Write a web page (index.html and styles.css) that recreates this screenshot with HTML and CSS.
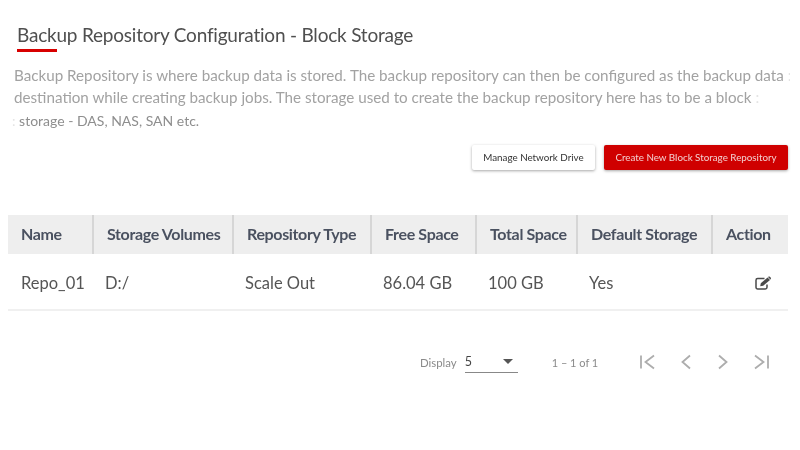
FILE: index.html
```html
<!DOCTYPE html>
<html lang="en">
<head>
    <meta charset="UTF-8">
    <meta name="viewport" content="width=device-width, initial-scale=1.0">
    <title>Backup Repository Configuration</title>
    <link rel="stylesheet" href="styles.css">
</head>
<body>
    <div class="page-head">
        <h1 class="page-title">Backup Repository Configuration - Block Storage</h1>
        <div class="title-rule"></div>
    </div>

    <div class="page-desc">
        <p>Backup Repository is where backup data is stored. The backup repository can then be configured as the backup data <span class="desc-cut">:</span></p>
        <p>destination while creating backup jobs. The storage used to create the backup repository here has to be a block <span class="desc-cut">:</span></p>
        <p class="desc-last"><span class="desc-cut">:</span> storage - DAS, NAS, SAN etc.</p>
    </div>

    <div class="button-row">
        <button class="btn btn-white">Manage Network Drive</button>
        <button class="btn btn-red">Create New Block Storage Repository</button>
    </div>

    <table class="repo-table">
        <colgroup>
            <col class="col-name">
            <col class="col-volumes">
            <col class="col-type">
            <col class="col-free">
            <col class="col-total">
            <col class="col-default">
            <col class="col-action">
        </colgroup>
        <thead>
            <tr>
                <th>Name</th>
                <th>Storage Volumes</th>
                <th>Repository Type</th>
                <th>Free Space</th>
                <th>Total Space</th>
                <th>Default Storage</th>
                <th>Action</th>
            </tr>
        </thead>
        <tbody>
            <tr>
                <td>Repo_01</td>
                <td>D:/</td>
                <td>Scale Out</td>
                <td>86.04 GB</td>
                <td>100 GB</td>
                <td>Yes</td>
                <td class="action-cell">
                    <svg class="edit-icon" width="17" height="14" viewBox="0 0 17 14">
                        <path d="M12 8.5V11.2C12 12.2 11.3 12.9 10.3 12.9H2.7C1.7 12.9 1 12.2 1 11.2V4.3C1 3.3 1.7 2.6 2.7 2.6H9.5" fill="none" stroke="#4a4a4a" stroke-width="1.5"/>
                        <path d="M5.2 10.2L5.8 7.2L12.6 1.4L15 3.9L8.2 9.7Z" fill="#4a4a4a"/>
                        <path d="M13.4 0.8C13.9 0.4 14.5 0.4 15 0.9L15.7 1.6C16.1 2.1 16.1 2.7 15.7 3.2L15.3 3.5L13 1.1Z" fill="#4a4a4a"/>
                    </svg>
                </td>
            </tr>
        </tbody>
    </table>

    <div class="pager">
        <span class="pager-label">Display</span>
        <div class="pager-select">
            <span>5</span>
            <span class="select-arrow"></span>
        </div>
        <span class="pager-range">1 – 1 of 1</span>
        <div class="pager-icons">
            <svg width="16" height="16" viewBox="0 0 16 16"><path d="M2 1.5V14.5M15 1.5L6.5 8L15 14.5" fill="none" stroke="#adadad" stroke-width="1.8"/></svg>
            <svg width="12" height="16" viewBox="0 0 12 16"><path d="M10 1.5L2.5 8L10 14.5" fill="none" stroke="#adadad" stroke-width="1.8"/></svg>
            <svg width="12" height="16" viewBox="0 0 12 16"><path d="M2 1.5L9.5 8L2 14.5" fill="none" stroke="#adadad" stroke-width="1.8"/></svg>
            <svg width="16" height="16" viewBox="0 0 16 16"><path d="M14 1.5V14.5M1 1.5L9.5 8L1 14.5" fill="none" stroke="#adadad" stroke-width="1.8"/></svg>
        </div>
    </div>
</body>
</html>
```
FILE: styles.css
```css
html, body {
    height: 100%;
    overflow: hidden;
}

body {
    font-family: Lato, "Open Sans", sans-serif;
    margin: 0;
    padding: 0;
    background-color: #fff;
    color: #4a4a4a;
    filter: blur(0.35px);
}

.page-head {
    padding: 23px 0 0 17px;
}

.page-title {
    margin: 0;
    font-size: 19px;
    line-height: 23px;
    font-weight: 400;
    letter-spacing: -0.21px;
    color: #4f4f4f;
}

.title-rule {
    width: 40px;
    height: 3px;
    margin-top: 3px;
    background-color: #d80000;
}

.page-desc {
    width: 778px;
    margin-left: 12px;
    margin-top: 12px;
    overflow: hidden;
    font-size: 15.2px;
    line-height: 22px;
    color: #a2a2a2;
}

.page-desc p {
    margin: 0;
    padding-left: 2px;
    white-space: nowrap;
}

.page-desc .desc-last {
    margin-top: 2px;
    padding-left: 0;
    font-size: 14px;
    color: #8e8e8e;
}

.desc-cut {
    color: #e4e4e4;
}

.button-row {
    display: flex;
    justify-content: flex-end;
    gap: 9px;
    margin-top: 13px;
    padding-right: 12px;
}

.btn {
    height: 25px;
    padding: 0 0 2px;
    border: none;
    border-radius: 2px;
    font-family: Lato, sans-serif;
    font-size: 9.8px;
    box-shadow: 0 1px 3px rgba(0, 0, 0, 0.35);
}

.btn-white {
    width: 123px;
    background-color: #fff;
    color: #333;
}

.btn-red {
    width: 184px;
    background-color: #cf0000;
    color: #f3d0d0;
}

.repo-table {
    width: 780px;
    margin: 45px 0 0 8px;
    border-collapse: collapse;
    table-layout: fixed;
}

.col-name { width: 85px; }
.col-volumes { width: 140px; }
.col-type { width: 138px; }
.col-free { width: 105px; }
.col-total { width: 101px; }
.col-default { width: 135px; }
.col-action { width: 76px; }

.repo-table th {
    height: 37px;
    padding: 0 0 2px 13px;
    background-color: #eeeeee;
    border-left: 2px solid #d6d6d6;
    text-align: left;
    font-size: 16px;
    font-weight: 700;
    color: #4a5160;
    letter-spacing: -0.35px;
    white-space: nowrap;
}

.repo-table th:first-child {
    border-left: none;
}

.repo-table td {
    height: 52px;
    padding: 3px 0 0 12px;
    border-bottom: 2px solid #f0f0f0;
    font-size: 16.5px;
    color: #555;
}

.repo-table td:first-child {
    padding-left: 13px;
}

.action-cell {
    text-align: right;
}

.edit-icon {
    display: block;
    margin-left: auto;
    margin-right: 16px;
}

.pager {
    display: flex;
    align-items: center;
    margin: 40px 0 0 420px;
    font-size: 11.4px;
    color: #8a8a8a;
}

.pager-select {
    display: flex;
    align-items: center;
    justify-content: space-between;
    box-sizing: border-box;
    width: 53px;
    height: 22px;
    margin-left: 8px;
    padding-right: 5px;
    border-bottom: 1px solid #888;
    color: #444;
    font-size: 12.5px;
}

.select-arrow {
    width: 0;
    height: 0;
    border-left: 5px solid transparent;
    border-right: 5px solid transparent;
    border-top: 5px solid #555;
}

.pager-range {
    margin-left: 34px;
    font-size: 11px;
}

.pager-icons {
    display: flex;
    align-items: center;
    gap: 25px;
    margin-left: 41px;
}
```
